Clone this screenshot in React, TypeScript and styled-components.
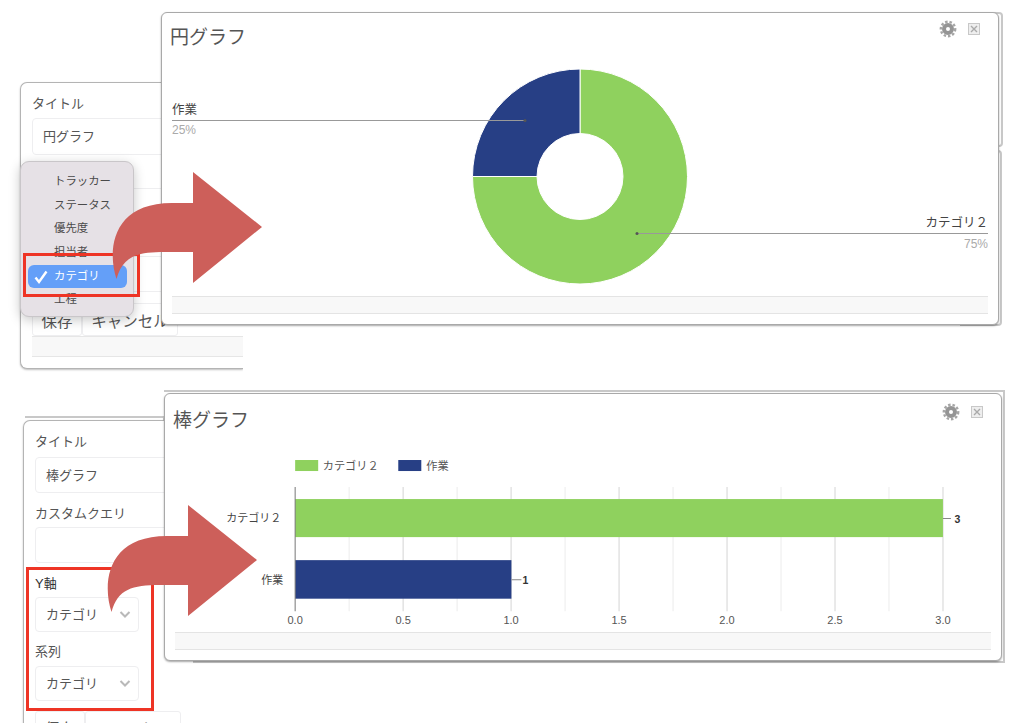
import React from "react";
import styled, { createGlobalStyle } from "styled-components";

const Global = createGlobalStyle`
  html, body { margin: 0; padding: 0; background: #fff; }
  body { font-family: "Liberation Sans", "Noto Sans CJK JP", sans-serif; color: #555; }
`;

const Canvas = styled.div`
  position: relative;
  width: 1024px;
  height: 723px;
  overflow: hidden;
  background: #fff;
`;

const Sheet = styled.div<{ $x: number; $y: number; $w: number; $h: number; $r?: number }>`
  position: absolute;
  left: ${(p) => p.$x}px;
  top: ${(p) => p.$y}px;
  width: ${(p) => p.$w}px;
  height: ${(p) => p.$h}px;
  box-sizing: border-box;
  border: 1px solid #c8c8c8;
  border-width: 2px 2px 2px 0;
  border-radius: 0 ${(p) => p.$r ?? 4}px ${(p) => p.$r ?? 4}px 0;
`;

const FormWindow = styled.section<{ $x: number; $y: number; $w: number; $h: number; $pad: number }>`
  position: absolute;
  left: ${(p) => p.$x}px;
  top: ${(p) => p.$y}px;
  width: ${(p) => p.$w}px;
  height: ${(p) => p.$h}px;
  box-sizing: border-box;
  padding: ${(p) => p.$pad}px 0 0 11px;
  background: #fff;
  border: 1px solid #b4b4b4;
  border-right: none;
  border-radius: 7px 0 0 7px;
  box-shadow: 0 1px 2px rgba(0, 0, 0, 0.25);
  clip-path: inset(-4px 0 -4px -4px);
  overflow: hidden;
`;

const Field = styled.div<{ $gap: number; $after: number }>`
  display: flex;
  flex-direction: column;
  gap: ${(p) => p.$gap}px;
  margin-bottom: ${(p) => p.$after}px;
`;

const Label = styled.label<{ $strong?: boolean }>`
  display: block;
  height: 16px;
  font-size: 13px;
  line-height: 16px;
  color: ${(p) => (p.$strong ? "#333" : "#555")};
  white-space: nowrap;
`;

const Control = styled.div<{ $w: number; $h: number }>`
  display: flex;
  align-items: center;
  justify-content: space-between;
  width: ${(p) => p.$w}px;
  height: ${(p) => p.$h}px;
  box-sizing: border-box;
  padding: 0 5px 2px 10px;
  font-size: 13px;
  color: #555;
  background: #fff;
  border: 1px solid #eeeef0;
  border-radius: 4px;
  white-space: nowrap;
`;

const Chevron = () => (
  <svg width="16" height="16" viewBox="0 0 16 16" fill="none" stroke="#b9b9b9" strokeWidth="2">
    <path d="M3.5 6 L8 10.5 L12.5 6" />
  </svg>
);

const Buttons = styled.div`
  display: flex;
  height: 33px;
`;

const Btn = styled.div<{ $w: number }>`
  display: flex;
  align-items: center;
  justify-content: center;
  width: ${(p) => p.$w}px;
  box-sizing: border-box;
  font-size: 15.5px;
  color: #555;
  border: 1px solid #eeeef0;
  border-radius: 3px;
  white-space: nowrap;
`;

const FormFooter = styled.div`
  height: 21px;
  background: #f8f8f8;
  border-top: 1px solid #e6e6e6;
  border-bottom: 1px solid #e6e6e6;
  box-sizing: border-box;
`;

const Menu = styled.ul`
  position: absolute;
  left: 20px;
  top: 161px;
  width: 114px;
  height: 156px;
  box-sizing: border-box;
  margin: 0;
  padding: 8px 6px 8px 7px;
  list-style: none;
  display: flex;
  flex-direction: column;
  background: #e6e1e6;
  border: 1px solid #c9c6c9;
  border-radius: 9px;
  box-shadow: 0 3px 12px rgba(0, 0, 0, 0.22);
`;

const MenuItem = styled.li<{ $on?: boolean }>`
  position: relative;
  height: 23.7px;
  line-height: 23.7px;
  padding-left: 26px;
  font-size: 11.4px;
  white-space: nowrap;
  color: ${(p) => (p.$on ? "#fff" : "#4a4a4a")};
  background: ${(p) => (p.$on ? "#649ff8" : "transparent")};
  border-radius: 6px;
`;

const Check = styled.svg`
  position: absolute;
  left: 5px;
  top: 4px;
`;

const ChartWindow = styled.section<{ $x: number; $y: number; $h: number }>`
  position: absolute;
  left: ${(p) => p.$x}px;
  top: ${(p) => p.$y}px;
  width: 838px;
  height: ${(p) => p.$h}px;
  box-sizing: border-box;
  display: flex;
  flex-direction: column;
  padding: 0 10px 10px;
  background: #fff;
  border: 1px solid #a9a9a9;
  border-radius: 6px;
  box-shadow: 0 1px 2px rgba(0, 0, 0, 0.35);
`;

const Header = styled.header<{ $h: number }>`
  display: flex;
  align-items: flex-start;
  justify-content: space-between;
  height: ${(p) => p.$h}px;
  flex: none;
`;

const Title = styled.h2<{ $top: number }>`
  margin: ${(p) => p.$top}px 0 0 -2px;
  font-size: 19px;
  line-height: 24px;
  font-weight: 400;
  color: #555;
`;

const Tools = styled.div<{ $top: number }>`
  display: flex;
  align-items: center;
  gap: 11px;
  margin: ${(p) => p.$top}px 8px 0 0;
`;

const ChartSvg = styled.svg`
  display: block;
  flex: 1;
  min-height: 0;
  width: 100%;
  font-family: "Liberation Sans", "Noto Sans CJK JP", sans-serif;
`;

const ChartFooter = styled.div`
  flex: none;
  height: 18px;
  box-sizing: border-box;
  background: #f8f8f8;
  border-top: 1px solid #e4e4e4;
  border-bottom: 1px solid #e4e4e4;
`;

const RedBox = styled.div<{ $x: number; $y: number; $w: number; $h: number }>`
  position: absolute;
  left: ${(p) => p.$x}px;
  top: ${(p) => p.$y}px;
  width: ${(p) => p.$w}px;
  height: ${(p) => p.$h}px;
  box-sizing: border-box;
  border: 3px solid #ee3425;
`;

const ArrowSvg = styled.svg<{ $x: number; $y: number }>`
  position: absolute;
  left: ${(p) => p.$x}px;
  top: ${(p) => p.$y}px;
`;

const Arrow = ({ x, y }: { x: number; y: number }) => (
  <ArrowSvg $x={x} $y={y} width="160" height="125" viewBox="105 165 160 125">
    <path
      fill="#cd5f5a"
      d="M116.5 279 C107 250 112 203 172 203 L193 203 L193 172 L262 227 L193 283 L193 252 L165 252 C137 252 123 256 116.5 279 Z"
    />
  </ArrowSvg>
);

const Gear = () => (
  <svg width="18" height="18" viewBox="0 0 18 18">
    <circle cx="9" cy="9" r="7.2" fill="none" stroke="#a6a6a6" strokeWidth="2.4" strokeDasharray="2.5 1.9" />
    <circle cx="9" cy="9" r="4" fill="none" stroke="#959595" strokeWidth="4" />
  </svg>
);

const CloseBox = () => (
  <svg width="12" height="12" viewBox="0 0 12 12" fill="none">
    <rect x="0.5" y="0.5" width="11" height="11" fill="#eee" stroke="#c8c8c8" />
    <path d="M3 3 L9 9 M9 3 L3 9" stroke="#aaa" strokeWidth="1.4" />
  </svg>
);

const Pie = () => (
  <ChartSvg viewBox="172 57 816 239" preserveAspectRatio="xMinYMin meet">
    <path
      fill="#8fd15e"
      stroke="#fff"
      d="M580 69 A107.5 107.5 0 1 1 472.5 176.5 L537 176.5 A43 43 0 1 0 580 133.5 Z"
    />
    <path
      fill="#273f85"
      stroke="#fff"
      d="M580 69 A107.5 107.5 0 0 0 472.5 176.5 L537 176.5 A43 43 0 0 1 580 133.5 Z"
    />
    <path d="M172 120.5 H525" stroke="#999" />
    <circle cx="525" cy="120.5" r="1.5" fill="#555" />
    <text x="172" y="114" fontSize="12.5" fill="#444">作業</text>
    <text x="172" y="134" fontSize="12" fill="#aaa">25%</text>
    <path d="M637 233.5 H988" stroke="#999" />
    <circle cx="637" cy="233.5" r="1.5" fill="#555" />
    <text x="988" y="227" fontSize="12.5" fill="#444" textAnchor="end">カテゴリ２</text>
    <text x="988" y="247.5" fontSize="12" fill="#aaa" textAnchor="end">75%</text>
  </ChartSvg>
);

const gridXs = Array.from({ length: 13 }, (_, i) => 295 + i * 53.92);
const ticks = ["0.0", "0.5", "1.0", "1.5", "2.0", "2.5", "3.0"];

const Bars = () => (
  <ChartSvg viewBox="175 447 815 184" preserveAspectRatio="xMinYMin meet">
    <rect x="295" y="460" width="23" height="11" fill="#8fd15e" />
    <text x="322.5" y="469.5" fontSize="11.2" fill="#555">カテゴリ２</text>
    <rect x="398" y="460" width="23" height="11" fill="#273f85" />
    <text x="426" y="469.5" fontSize="11.2" fill="#555">作業</text>
    {gridXs.slice(1).map((x, i) => (
      <path key={x} d={`M${x} 487 V611`} stroke={i % 2 === 1 ? "#d4d4d4" : "#ececec"} />
    ))}
    <rect x="295" y="499" width="647" height="38" fill="#8fd15e" />
    <rect x="295" y="560" width="216" height="38.5" fill="#273f85" />
    <path d="M295 487 V611" stroke="#777" strokeWidth="1" />
    <path d="M942 518.5 H950 M511 579.5 H521" stroke="#888" />
    <text x="956.5" y="523" fontSize="10.5" fontWeight="700" fill="#333" textAnchor="middle">3</text>
    <text x="525" y="584" fontSize="10.5" fontWeight="700" fill="#333" textAnchor="middle">1</text>
    <text x="281" y="522" fontSize="11" fill="#444" textAnchor="end">カテゴリ２</text>
    <text x="283" y="584" fontSize="11" fill="#444" textAnchor="end">作業</text>
    {ticks.map((t, i) => (
      <text key={t} x={295 + i * 107.83} y="624" fontSize="11" fill="#555" textAnchor="middle">{t}</text>
    ))}
  </ChartSvg>
);

export default function App() {
  return (
    <Canvas>
      <Global />

      <Sheet $x={960} $y={12} $w={43} $h={135} />
      <Sheet $x={960} $y={150} $w={42} $h={176} />
      <Sheet $x={25} $y={416} $w={140} $h={30} $r={0} />
      <Sheet $x={164} $y={390} $w={841} $h={273} $r={0} />

      <FormWindow $x={20} $y={82} $w={223} $h={287} $pad={13}>
        <Field $gap={6} $after={9}>
          <Label>タイトル</Label>
          <Control $w={260} $h={37}>円グラフ</Control>
        </Field>
        <Field $gap={8} $after={9}>
          <Label />
          <Control $w={260} $h={36} />
        </Field>
        <Field $gap={7} $after={11}>
          <Label />
          <Control $w={260} $h={36} />
        </Field>
        <Buttons>
          <Btn $w={50}>保存</Btn>
          <Btn $w={96}>キャンセル</Btn>
        </Buttons>
        <FormFooter />
      </FormWindow>

      <Menu>
        <MenuItem>トラッカー</MenuItem>
        <MenuItem>ステータス</MenuItem>
        <MenuItem>優先度</MenuItem>
        <MenuItem>担当者</MenuItem>
        <MenuItem $on>
          <Check width="16" height="16" viewBox="0 0 16 16" fill="none" stroke="#fff" strokeWidth="2.4">
            <path d="M2.5 8.5 L6 13 L13.5 2.5" />
          </Check>
          カテゴリ
        </MenuItem>
        <MenuItem>工程</MenuItem>
      </Menu>
      <RedBox $x={23} $y={253} $w={117} $h={44} />

      <ChartWindow $x={161} $y={12} $h={313}>
        <Header $h={44}>
          <Title $top={13}>円グラフ</Title>
          <Tools $top={7}>
            <Gear />
            <CloseBox />
          </Tools>
        </Header>
        <Pie />
        <ChartFooter />
      </ChartWindow>

      <FormWindow $x={23} $y={420} $w={170} $h={320} $pad={13}>
        <Field $gap={7} $after={13}>
          <Label>タイトル</Label>
          <Control $w={200} $h={36}>棒グラフ</Control>
        </Field>
        <Field $gap={5} $after={13}>
          <Label>カスタムクエリ</Label>
          <Control $w={200} $h={36} />
        </Field>
        <Field $gap={5} $after={12}>
          <Label $strong>Y軸</Label>
          <Control $w={104} $h={35}>
            カテゴリ
            <Chevron />
          </Control>
        </Field>
        <Field $gap={6} $after={10}>
          <Label>系列</Label>
          <Control $w={104} $h={35}>
            カテゴリ
            <Chevron />
          </Control>
        </Field>
        <Buttons>
          <Btn $w={50}>保存</Btn>
          <Btn $w={96}>キャンセル</Btn>
        </Buttons>
      </FormWindow>
      <RedBox $x={26} $y={567} $w={128} $h={144} />

      <ChartWindow $x={164} $y={393} $h={268}>
        <Header $h={53}>
          <Title $top={15}>棒グラフ</Title>
          <Tools $top={9}>
            <Gear />
            <CloseBox />
          </Tools>
        </Header>
        <Bars />
        <ChartFooter />
      </ChartWindow>

      <Arrow x={105} y={165} />
      <Arrow x={100} y={498} />
    </Canvas>
  );
}
